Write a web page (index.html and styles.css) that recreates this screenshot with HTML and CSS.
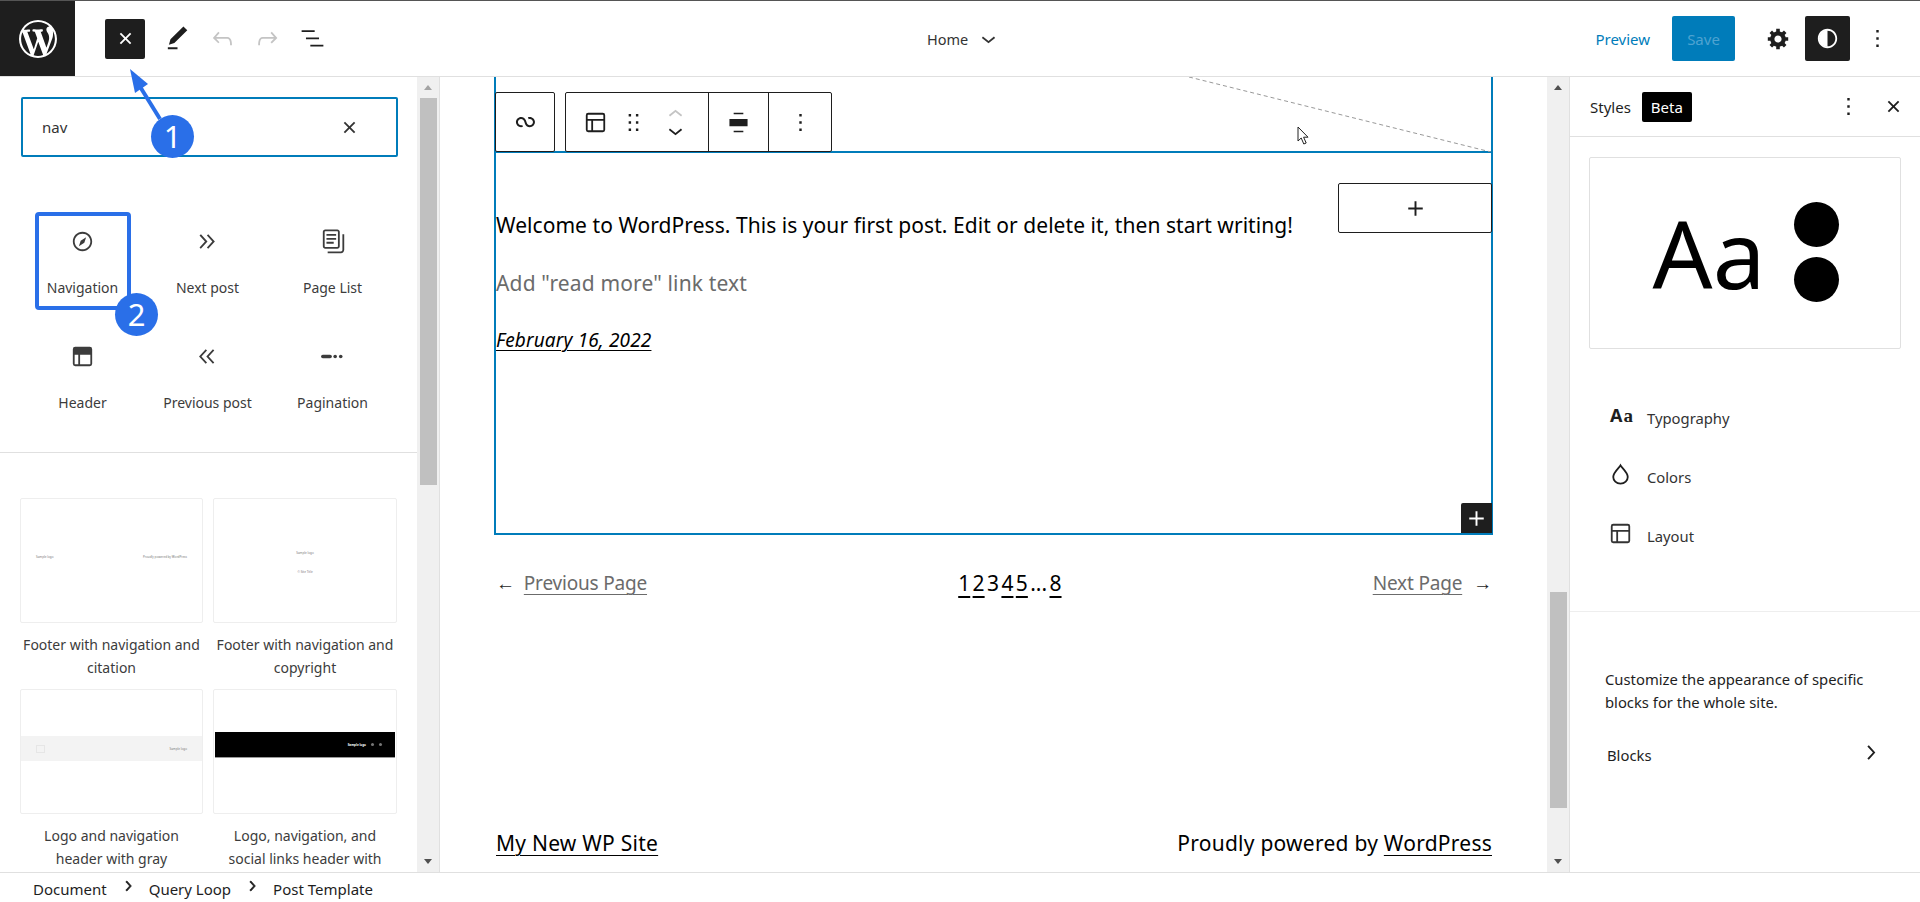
FILE: index.html
```html
<!DOCTYPE html>
<html lang="en">
<head>
  <meta charset="UTF-8">
  <title>Edit site - Styles</title>
  <link rel="stylesheet" href="styles.css">
</head>
<body>

  <!-- Top bar -->
  <header class="topbar">
    <div class="wp-logo">
      <svg width="38" height="38" viewBox="0 0 20 20"><path d="M20 10c0-5.51-4.49-10-10-10C4.48 0 0 4.49 0 10c0 5.52 4.48 10 10 10 5.51 0 10-4.48 10-10zM7.78 15.37L4.37 6.22c.55-.02 1.17-.08 1.17-.08.5-.06.44-1.13-.06-1.11 0 0-1.45.11-2.37.11-.18 0-.37 0-.58-.01C4.12 2.69 6.87 1.11 10 1.11c2.33 0 4.45.87 6.05 2.34-.68-.11-1.65.39-1.65 1.58 0 .74.45 1.36.9 2.1.35.61.55 1.36.55 2.46 0 1.49-1.4 5-1.4 5l-3.03-8.37c.54-.02.82-.17.82-.17.5-.05.44-1.25-.06-1.22 0 0-1.44.12-2.38.12-.87 0-2.33-.12-2.33-.12-.5-.03-.56 1.2-.06 1.22l.92.08 1.26 3.41zM17.41 10c.24-.64.74-1.87.43-4.25.7 1.29 1.05 2.71 1.05 4.25 0 3.29-1.73 6.24-4.4 7.78.97-2.59 1.94-5.2 2.92-7.78zM6.1 18.09C3.12 16.65 1.11 13.53 1.11 10c0-1.3.23-2.48.72-3.59C3.25 10.3 4.67 14.2 6.1 18.09zm4.03-6.63l2.58 6.98c-.86.29-1.76.45-2.71.45-.79 0-1.57-.11-2.29-.33.81-2.38 1.62-4.74 2.42-7.1z"/></svg>
    </div>
    <div class="topbar-tools">
      <span class="tool-close"><svg width="29" height="29" viewBox="0 0 24 24"><path d="M12 13.06l3.712 3.713 1.061-1.06L13.061 12l3.712-3.712-1.06-1.06L12 10.938 8.288 7.227l-1.061 1.06L10.939 12l-3.712 3.712 1.06 1.061L12 13.061z"/></svg></span>
      <span class="tool"><svg width="29" height="29" viewBox="0 0 24 24"><path d="M20.1 5.1L16.9 2 6.2 12.7l-1.3 4.4 4.5-1.3L20.1 5.1zM4 20.8h8v-1.5H4v1.5z"/></svg></span>
      <span class="tool tool-off"><svg width="29" height="29" viewBox="0 0 24 24"><path d="M18.3 11.7c-.6-.6-1.4-.9-2.3-.9H6.7l2.9-3.3-1.1-1-4.5 5L8.5 16l1-1-2.7-2.7H16c.5 0 .9.2 1.3.5 1 1 1 3.4 1 4.5v.3h1.5v-.2c0-1.5 0-4.3-1.5-5.7z"/></svg></span>
      <span class="tool tool-off"><svg width="29" height="29" viewBox="0 0 24 24"><path d="M15.6 6.5l-1.1 1 2.9 3.3H8c-.9 0-1.7.3-2.3.9-1.4 1.5-1.4 4.2-1.4 5.6v.2h1.5v-.3c0-1.1 0-3.5 1-4.5.3-.3.7-.5 1.3-.5h9.2L14.5 15l1.1 1.1 4.6-4.6-4.6-5z"/></svg></span>
      <span class="tool"><svg width="29" height="29" viewBox="0 0 24 24"><path d="M13.8 5.2H3v1.5h10.8V5.2zm-3.6 12v1.5H21v-1.5H10.2zm7.2-6H6.6v1.5h10.8v-1.5z"/></svg></span>
    </div>
    <div class="topbar-title">
      <span>Home</span>
      <svg width="29" height="29" viewBox="0 0 24 24"><path d="M17.5 11.6L12 16l-5.5-4.4.9-1.2L12 14l4.5-3.6 1 1.2z"/></svg>
    </div>
    <div class="topbar-actions">
      <span class="preview-link">Preview</span>
      <span class="save-btn">Save</span>
      <span class="gear"><svg width="24" height="24" viewBox="0 0 20 20"><path d="M18 12h-2.18c-.17.7-.44 1.35-.81 1.93l1.54 1.54-2.1 2.1-1.54-1.54c-.58.36-1.23.63-1.91.79V19H8v-2.18c-.68-.16-1.33-.43-1.91-.79l-1.54 1.54-2.12-2.12 1.54-1.54c-.36-.58-.63-1.23-.79-1.91H1V9.03h2.17c.16-.7.44-1.35.8-1.94L2.43 5.55l2.1-2.1 1.54 1.54c.58-.37 1.24-.64 1.93-.81V2h3v2.18c.68.16 1.33.43 1.91.79l1.54-1.54 2.12 2.12-1.54 1.54c.36.59.64 1.24.8 1.94H18V12zm-8.5 1.5c1.66 0 3-1.34 3-3s-1.34-3-3-3-3 1.34-3 3 1.34 3 3 3z" transform="translate(.5 -.5)"/></svg></span>
      <span class="styles-btn"><svg width="29" height="29" viewBox="0 0 24 24"><path d="M12 4c-4.400 0-8 3.600-8 8s3.600 8 8 8 8-3.600 8-8-3.600-8-8-8zm0 14.500c-3.600 0-6.500-2.900-6.500-6.500S8.400 5.500 12 5.500s6.500 2.900 6.500 6.500-2.900 6.500-6.500 6.500z"/><path d="M12 5a7 7 0 000 14z"/></svg></span>
      <span class="more"><svg width="29" height="29" viewBox="0 0 24 24"><path d="M13 19h-2v-2h2v2zm0-6h-2v-2h2v2zm0-6h-2V5h2v2z"/></svg></span>
    </div>
  </header>

  <div class="workspace">

    <!-- Block inserter -->
    <aside class="inserter">
      <div class="inserter-inner">
        <div class="search-box">
          <span>nav</span>
          <svg width="29" height="29" viewBox="0 0 24 24"><path d="M12 13.06l3.712 3.713 1.061-1.06L13.061 12l3.712-3.712-1.06-1.06L12 10.938 8.288 7.227l-1.061 1.06L10.939 12l-3.712 3.712 1.06 1.061L12 13.061z"/></svg>
        </div>

        <div class="block-grid">
          <div class="block-item selected">
            <svg width="29" height="29" viewBox="0 0 24 24"><path d="M12 4c-4.400 0-8 3.600-8 8s3.600 8 8 8 8-3.600 8-8-3.600-8-8-8zm0 14.500c-3.600 0-6.500-2.900-6.500-6.500S8.400 5.500 12 5.500s6.500 2.900 6.500 6.500-2.900 6.500-6.500 6.500zM9 16l4.500-3L15 8.400l-4.500 3L9 16z"/></svg>
            <span>Navigation</span>
          </div>
          <div class="block-item">
            <svg width="29" height="29" viewBox="0 0 24 24"><path d="M6.600 6L5.400 7l4.500 5-4.500 5 1.100 1 5.500-6-5.400-6zm6 0l-1.100 1 4.500 5-4.500 5 1.100 1 5.500-6-5.500-6z"/></svg>
            <span>Next post</span>
          </div>
          <div class="block-item">
            <svg width="29" height="29" viewBox="0 0 24 24"><path d="M7 13.800h6v-1.500H7v1.500zM18 16V4c0-1.100-.9-2-2-2H6c-1.100 0-2 .9-2 2v12c0 1.100.9 2 2 2h10c1.100 0 2-.9 2-2zM5.500 16V4c0-.3.2-.5.5-.5h10c.3 0 .5.2.5.5v12c0 .3-.2.5-.5.5H6c-.3 0-.5-.2-.5-.5zM7 10.500h8V9H7v1.500zm0-3.300h8V5.800H7v1.400zM20.200 6v13c0 .7-.6 1.200-1.200 1.200H8v1.500h11c1.500 0 2.700-1.200 2.700-2.800V6h-1.500z"/></svg>
            <span>Page List</span>
          </div>
          <div class="block-item">
            <svg width="29" height="29" viewBox="0 0 24 24"><path d="M18.500 10.500H10v8h8a.5.5 0 00.5-.5v-7.500zm-10 0h-3V18a.5.5 0 00.5.5h2.500v-8zM6 4h12a2 2 0 012 2v12a2 2 0 01-2 2H6a2 2 0 01-2-2V6a2 2 0 012-2z"/></svg>
            <span>Header</span>
          </div>
          <div class="block-item">
            <svg width="29" height="29" viewBox="0 0 24 24"><path d="M11.600 7l-1.100-1L5 12l5.500 6 1.100-1L7 12l4.600-5zm6 0l-1.100-1-5.500 6 5.500 6 1.100-1-4.600-5 4.600-5z"/></svg>
            <span>Previous post</span>
          </div>
          <div class="block-item">
            <svg width="29" height="29" viewBox="0 0 24 24"><path d="M4 10.500h6a1 1 0 010 3H4a1 1 0 010-3z"/><circle cx="14.200" cy="12" r="1.500"/><circle cx="18.800" cy="12" r="1.500"/></svg>
            <span>Pagination</span>
          </div>
        </div>

        <div class="pattern-grid">
          <div class="pattern">
            <div class="thumb thumb-split"><span>Sample logo</span><span>Proudly powered by WordPress</span></div>
            <p>Footer with navigation and citation</p>
          </div>
          <div class="pattern">
            <div class="thumb thumb-stack"><span>Sample logo</span><span>© Site Title</span></div>
            <p>Footer with navigation and copyright</p>
          </div>
          <div class="pattern">
            <div class="thumb"><div class="band-gray"><i></i><span>Sample logo</span></div></div>
            <p>Logo and navigation<br>header with gray</p>
          </div>
          <div class="pattern">
            <div class="thumb"><div class="band-black"><span>Sample logo</span><i></i><i></i></div></div>
            <p>Logo, navigation, and<br>social links header with</p>
          </div>
        </div>
      </div>
      <div class="scrollbar">
        <span class="arrow-up arrow-faint"></span>
        <span class="thumb-bar bar-left"></span>
        <span class="arrow-down"></span>
      </div>
    </aside>

    <!-- Canvas -->
    <main class="canvas">
      <div class="canvas-col">
        <div class="template-block">
          <div class="featured">
            <svg class="diagonal" width="997" height="75"><line x1="693" y1="0" x2="995" y2="75" stroke="#999" stroke-width="1" stroke-dasharray="4 3"/></svg>
            <svg class="mouse" width="13" height="20" viewBox="0 0 13 20"><path d="M1 1v14l3.200-3 2.600 6 2.400-1-2.600-5.800h4.400z" fill="#fff" stroke="#222"/></svg>
            <div class="block-toolbar">
              <div class="tb-group tb-parent">
                <span class="tb-btn"><svg width="29" height="29" viewBox="0 0 24 24"><path d="M18.182 11.639c0 1.441-1.168 2.610-2.609 2.610-1.215 0-2.238-.831-2.528-1.957l-.007-.03-.01-.029-.629-1.856-.004.001c-.537-1.728-2.148-2.984-4.055-2.984-2.344 0-4.245 1.901-4.245 4.245s1.901 4.245 4.245 4.245c.545 0 1.069-.103 1.550-.292l-.597-1.522c-.294.115-.615.179-.953.179-1.441 0-2.610-1.168-2.610-2.610s1.169-2.610 2.610-2.610c1.215 0 2.238.831 2.527 1.957l.01-.003.593 1.748c.482 1.815 2.135 3.153 4.103 3.153 2.345 0 4.245-1.901 4.245-4.245s-1.900-4.245-4.245-4.245c-.544 0-1.066.103-1.546.291l.596 1.523c.293-.115.613-.178.950-.178 1.441 0 2.609 1.168 2.609 2.609z"/></svg></span>
              </div>
              <div class="tb-group tb-main">
                <div class="tb-section tb-first">
                  <svg width="29" height="29" viewBox="0 0 24 24"><path d="M18 5.500H6a.5.5 0 00-.5.5v3h13V6a.5.5 0 00-.5-.5zm.5 5H10v8h8a.5.5 0 00.5-.5v-7.500zm-10 0h-3V18a.5.5 0 00.5.5h2.500v-8zM6 4h12a2 2 0 012 2v12a2 2 0 01-2 2H6a2 2 0 01-2-2V6a2 2 0 012-2z"/></svg>
                  <svg width="29" height="29" viewBox="0 0 24 24"><path d="M8 7h2V5H8v2zm0 6h2v-2H8v2zm0 6h2v-2H8v2zm6-14v2h2V5h-2zm0 8h2v-2h-2v2zm0 6h2v-2h-2v2z"/></svg>
                  <span class="movers">
                    <svg class="mover-off" width="29" height="29" viewBox="0 0 24 24"><path d="M6.500 12.400L12 8l5.500 4.400-.9 1.200L12 10l-4.500 3.600-1-1.200z"/></svg>
                    <svg width="29" height="29" viewBox="0 0 24 24"><path d="M17.500 11.600L12 16l-5.500-4.400.9-1.200L12 14l4.500-3.600 1 1.200z"/></svg>
                  </span>
                </div>
                <div class="tb-section tb-align">
                  <svg width="29" height="29" viewBox="0 0 24 24"><path d="M8 4h8v1.200H8zM4.500 9h15v6h-15zM8 18.800h8V20H8z"/></svg>
                </div>
                <div class="tb-section tb-more">
                  <svg width="29" height="29" viewBox="0 0 24 24"><path d="M13 19h-2v-2h2v2zm0-6h-2v-2h2v2zm0-6h-2V5h2v2z"/></svg>
                </div>
              </div>
            </div>
          </div>
          <div class="post-body">
            <p class="post-excerpt">Welcome to WordPress. This is your first post. Edit or delete it, then start writing!</p>
            <p class="read-more">Add "read more" link text</p>
            <p class="post-date"><span>February 16, 2022</span></p>
            <span class="add-outline"><svg width="29" height="29" viewBox="0 0 24 24"><path d="M18 11.200h-5.200V6h-1.600v5.200H6v1.600h5.200V18h1.600v-5.200H18z"/></svg></span>
            <span class="add-dark"><svg width="29" height="29" viewBox="0 0 24 24"><path d="M18 11.200h-5.200V6h-1.600v5.200H6v1.600h5.200V18h1.600v-5.200H18z"/></svg></span>
          </div>
        </div>

        <div class="pager">
          <div class="pager-side pager-prev"><span class="pager-arrow">←</span><a>Previous Page</a></div>
          <div class="pager-nums"><a>1</a><a>2</a><b>3</b><a>4</a><a>5</a><b>...</b><a>8</a></div>
          <div class="pager-side pager-next"><a>Next Page</a><span class="pager-arrow">→</span></div>
        </div>

        <div class="site-foot">
          <a>My New WP Site</a>
          <span>Proudly powered by <a>WordPress</a></span>
        </div>
      </div>
      <div class="scrollbar">
        <span class="arrow-up"></span>
        <span class="thumb-bar bar-canvas"></span>
        <span class="arrow-down"></span>
      </div>
    </main>

    <!-- Styles sidebar -->
    <aside class="styles-panel">
      <div class="panel-head">
        <span class="panel-title">Styles</span>
        <span class="beta">Beta</span>
        <span class="panel-more"><svg width="29" height="29" viewBox="0 0 24 24"><path d="M13 19h-2v-2h2v2zm0-6h-2v-2h2v2zm0-6h-2V5h2v2z"/></svg></span>
        <svg width="29" height="29" viewBox="0 0 24 24"><path d="M12 13.060l3.712 3.713 1.061-1.060L13.061 12l3.712-3.712-1.060-1.060L12 10.938 8.288 7.227l-1.061 1.060L10.939 12l-3.712 3.712 1.060 1.061L12 13.061z"/></svg>
      </div>
      <div class="style-preview">
        <span class="preview-aa">Aa</span>
        <span class="preview-dots"><i></i><i></i></span>
      </div>
      <div class="style-menu">
        <div class="menu-row"><span class="menu-icon aa-icon">A<em>a</em></span><span>Typography</span></div>
        <div class="menu-row"><span class="menu-icon"><svg width="29" height="29" viewBox="0 0 24 24"><path d="M12 4.500c-1 2-6 5.800-6 9.500 0 3 2.500 5.500 6 5.500s6-2.500 6-5.500c0-3.700-5-7.500-6-9.500z" fill="none" stroke="#1e1e1e" stroke-width="1.500"/></svg></span><span>Colors</span></div>
        <div class="menu-row"><span class="menu-icon"><svg width="29" height="29" viewBox="0 0 24 24"><path d="M18 5.500H6a.5.5 0 00-.5.5v3h13V6a.5.5 0 00-.5-.5zm.5 5H10v8h8a.5.5 0 00.5-.5v-7.500zm-10 0h-3V18a.5.5 0 00.5.5h2.500v-8zM6 4h12a2 2 0 012 2v12a2 2 0 01-2 2H6a2 2 0 01-2-2V6a2 2 0 012-2z"/></svg></span><span>Layout</span></div>
      </div>
      <div class="panel-blocks">
        <p>Customize the appearance of specific blocks for the whole site.</p>
        <div class="blocks-row"><span>Blocks</span><svg width="29" height="29" viewBox="0 0 24 24"><path d="M10.600 6L9.400 7l4.600 5-4.600 5 1.200 1 5.400-6z"/></svg></div>
      </div>
    </aside>
  </div>

  <footer class="crumbs">
    <span>Document</span>
    <svg width="20" height="20" viewBox="0 0 24 24"><path d="M10.600 6L9.400 7l4.600 5-4.600 5 1.200 1 5.400-6z"/></svg>
    <span>Query Loop</span>
    <svg width="20" height="20" viewBox="0 0 24 24"><path d="M10.600 6L9.400 7l4.600 5-4.600 5 1.200 1 5.400-6z"/></svg>
    <span>Post Template</span>
  </footer>

  <!-- Tutorial annotations -->
  <svg class="note-arrow" width="200" height="140" viewBox="0 0 200 140"><path d="M160 118L139 84" stroke="#2a6fe8" stroke-width="4" fill="none"/><path d="M130 68l18 15-13 9z" fill="#2a6fe8"/></svg>
  <span class="note-badge note-one">1</span>
  <span class="note-badge note-two">2</span>

</body>
</html>
```

FILE: styles.css
```css
* { box-sizing: border-box; margin: 0; padding: 0; }
html, body { height: 100%; }
body { width: 1920px; height: 902px; overflow: hidden; background: white; color: #1e1e1e; font-family: "Noto Sans", sans-serif; font-size: 14px; border-top: 1px solid #555; position: relative; }
svg { display: block; fill: currentColor; flex: none; }

/* top bar */
.topbar { display: flex; align-items: center; height: 76px; border-bottom: 1px solid #e0e0e0; position: relative; }
.wp-logo { width: 75px; height: 75px; background: #1e1e1e; color: white; display: flex; align-items: center; justify-content: center; }
.topbar-tools { display: flex; align-items: center; margin-left: 30px; }
.tool-close { width: 40px; height: 40px; border-radius: 2px; background: #1e1e1e; color: white; display: flex; align-items: center; justify-content: center; }
.tool { width: 45px; display: flex; justify-content: center; }
.tool:nth-child(2) { margin-left: 10px; }
.tool-off { color: #c4c4c4; }
.topbar-title { display: flex; align-items: center; gap: 6px; margin-left: 592px; font-size: 14.5px; color: #333; }
.topbar-actions { display: flex; align-items: center; margin-left: auto; }
.preview-link { color: #007cba; font-size: 15px; margin-right: 22px; }
.save-btn { width: 63px; height: 45px; background: #007cba; color: #4ea3d1; border-radius: 2px; display: flex; align-items: center; justify-content: center; font-size: 15px; }
.gear { margin: 0 15px 0 31px; }
.styles-btn { width: 45px; height: 45px; background: #1e1e1e; color: white; border-radius: 2px; display: flex; align-items: center; justify-content: center; }
.more { margin: 0 28px 0 13px; }

.workspace { display: flex; height: 795px; }

/* inserter */
.inserter { width: 440px; display: flex; border-right: 1px solid #e0e0e0; }
.inserter-inner { width: 417px; overflow: hidden; }
.search-box { width: 377px; height: 60px; margin: 20px 0 0 21px; border: 2px solid #007cba; border-radius: 2px; display: flex; align-items: center; justify-content: space-between; padding: 0 32px 0 19px; font-size: 15px; color: #333; }
.block-grid { display: grid; grid-template-columns: repeat(3, 125px); row-gap: 17px; padding: 55px 0 27px 20px; border-bottom: 1px solid #e0e0e0; }
.block-item { width: 96px; height: 98px; justify-self: center; display: flex; flex-direction: column; align-items: center; padding-top: 15px; font-size: 14px; color: #3c3c3c; white-space: nowrap; }
.block-item span { margin-top: 22px; line-height: 20px; }
.block-item.selected { outline: 4px solid #2a6fe8; outline-offset: -4px; border-radius: 4px; }
.pattern-grid { display: grid; grid-template-columns: 183px 184px; column-gap: 10px; row-gap: 10px; padding: 45px 0 0 20px; }
.pattern p { margin-top: 11px; text-align: center; font-size: 14px; line-height: 22.5px; color: #3c3c3c; }
.thumb { height: 125px; border: 1px solid #eee; border-radius: 2px; font-size: 3px; color: #777; position: relative; overflow: hidden; }
.thumb-split { display: flex; justify-content: space-between; padding: 56px 15px 0; }
.thumb-stack { display: flex; flex-direction: column; align-items: center; gap: 15px; padding-top: 52px; }
.band-gray { margin-top: 46px; height: 25px; background: #f3f3f3; display: flex; align-items: center; justify-content: space-between; padding: 0 15px; }
.band-gray i { width: 9px; height: 8px; border: 1px solid #e6e6e6; }
.band-black { margin: 42px 1px 0; height: 26px; background: black; border-bottom: 1px solid #999; color: white; display: flex; align-items: center; justify-content: flex-end; gap: 5px; padding-right: 13px; font-weight: bold; }
.band-black i { width: 3px; height: 3px; background: #777; border-radius: 50%; }

/* scrollbars */
.scrollbar { width: 22px; background: #f0f0f0; display: flex; flex-direction: column; align-items: center; padding: 8px 0 8px; flex: none; }
.arrow-up, .arrow-down { width: 0; height: 0; border-left: 4.5px solid transparent; border-right: 4.5px solid transparent; }
.arrow-up { border-bottom: 5px solid #505050; margin-bottom: 8px; }
.arrow-faint { border-bottom-color: #a3a3a3; }
.arrow-down { border-top: 5px solid #505050; margin-top: auto; }
.thumb-bar { width: 17px; background: #c0c0c0; display: block; }
.bar-left { height: 387px; }
.bar-canvas { height: 216px; margin-top: 494px; }

/* canvas */
.canvas { width: 1130px; display: flex; border-right: 1px solid #e0e0e0; }
.canvas-col { width: 1108px; padding-left: 56px; font-size: 21px; letter-spacing: 0.05px; color: black; overflow: hidden; }
.template-block { width: 999px; margin-left: -2px; border: solid #007cba; border-width: 0 2px 2px; height: 458px; }
.featured { height: 76px; border-bottom: 2px solid #007cba; position: relative; }
.diagonal { position: absolute; left: 0; top: 0; }
.mouse { position: absolute; left: 801px; top: 49px; }
.block-toolbar { position: absolute; left: -1px; bottom: -1px; display: flex; gap: 10px; z-index: 2; }
.tb-group { display: flex; height: 60px; background: white; border: 1px solid #1e1e1e; border-radius: 2px; color: #1e1e1e; }
.tb-parent { width: 60px; align-items: center; justify-content: center; }
.tb-btn { display: block; }
.tb-main { width: 267px; }
.tb-section { display: flex; align-items: center; justify-content: center; }
.tb-first { width: 142px; padding-left: 15px; gap: 9px; justify-content: flex-start; }
.tb-align { width: 61px; border-left: 1px solid #1e1e1e; border-right: 1px solid #1e1e1e; }
.tb-more { flex: 1; }
.movers { display: flex; flex-direction: column; margin-left: 4px; }
.movers svg + svg { margin-top: -13px; }
.movers .mover-off { color: #c4c4c4; }

.post-body { height: 380px; position: relative; padding-top: 52px; }
.post-excerpt { line-height: 40px; }
.read-more { margin-top: 18px; line-height: 40px; color: #6b6b6b; letter-spacing: 0.15px; }
.post-date { margin-top: 17px; line-height: 40px; font-size: 19px; font-style: italic; letter-spacing: 0.15px; }
.post-date span { text-decoration: underline; text-underline-offset: 3px; text-decoration-thickness: 1px; }
.add-outline { position: absolute; right: -1px; top: 30px; width: 154px; height: 50px; background: white; border: 1px solid #1e1e1e; border-radius: 2px; display: flex; align-items: center; justify-content: center; color: #1e1e1e; }
.add-dark { position: absolute; right: -1px; bottom: 0; width: 31px; height: 30px; background: #1e1e1e; color: white; border-radius: 2px 0 0 0; display: flex; align-items: center; justify-content: center; }

.pager { width: 996px; display: flex; justify-content: space-between; align-items: center; margin-top: 28px; height: 40px; font-size: 19px; letter-spacing: -0.01em; }
.pager a { color: #6b6b6b; text-decoration: underline; text-underline-offset: 4px; text-decoration-thickness: 1px; }
.pager-side { display: flex; align-items: center; }
.pager-arrow { color: #1e1e1e; }
.pager-prev .pager-arrow { margin-right: 9px; }
.pager-next .pager-arrow { margin-left: 11px; }
.pager-nums { display: flex; font-size: 21px; gap: 2.4px; letter-spacing: 0; }
.pager-nums a { color: black; text-underline-offset: 5px; text-decoration-thickness: 2px; }
.pager-nums b { font-weight: normal; }

.site-foot { width: 996px; display: flex; justify-content: space-between; margin-top: 220px; line-height: 40px; letter-spacing: 0.25px; }
.site-foot a { color: black; text-decoration: underline; text-underline-offset: 4px; text-decoration-thickness: 1px; }

/* styles panel */
.styles-panel { width: 350px; flex: none; }
.panel-head { height: 60px; display: flex; align-items: center; padding: 0 12px 0 20px; border-bottom: 1px solid #e0e0e0; }
.panel-title { font-size: 15px; }
.beta { width: 50px; height: 30px; margin-left: 11px; background: black; color: white; border-radius: 2px; display: flex; align-items: center; justify-content: center; font-size: 15px; }
.panel-more { margin: 0 16px 0 auto; }
.style-preview { width: 312px; height: 192px; margin: 20px 0 39px 19px; padding-left: 2px; border: 1px solid #e0e0e0; border-radius: 2px; display: flex; align-items: center; justify-content: center; gap: 29px; }
.preview-aa { font-size: 94px; line-height: 1; color: black; }
.preview-dots { display: flex; flex-direction: column; gap: 10px; margin-bottom: 2px; }
.preview-dots i { width: 45px; height: 45px; border-radius: 50%; background: black; display: block; }
.style-menu { padding: 0 0 45px 30px; border-bottom: 1px solid #eee; }
.menu-row { display: flex; align-items: center; height: 59.2px; font-size: 14.8px; color: #333; }
.menu-icon { width: 41px; display: flex; margin: 0 0 5px 6px; }
.aa-icon { font-weight: bold; font-size: 18px; padding-left: 4px; align-items: baseline; color: #1e1e1e; }
.aa-icon em { font-family: "Liberation Serif", serif; font-style: normal; font-size: 19px; margin-left: 1px; }
.panel-blocks { padding: 56px 35px 0 35px; font-size: 14.8px; color: #1e1e1e; }
.panel-blocks p { line-height: 23px; }
.blocks-row { display: flex; justify-content: space-between; align-items: center; margin-top: 24px; padding-left: 2px; }
.blocks-row svg { margin-bottom: 6px; }

/* breadcrumb */
.crumbs { height: 30px; border-top: 1px solid #e0e0e0; display: flex; align-items: center; padding: 2px 0 0 33px; gap: 11px; font-size: 15px; color: #1e1e1e; }
.crumbs svg { margin-bottom: 5px; stroke: currentColor; stroke-width: 1; }

/* annotations */
.note-arrow { position: absolute; left: 0; top: 0; }
.note-badge { position: absolute; width: 43px; height: 43px; border-radius: 50%; background: #2a6fe8; color: white; font-size: 31px; line-height: 43px; text-align: center; }
.note-one { left: 151px; top: 114px; }
.note-two { left: 115px; top: 292px; }
```
